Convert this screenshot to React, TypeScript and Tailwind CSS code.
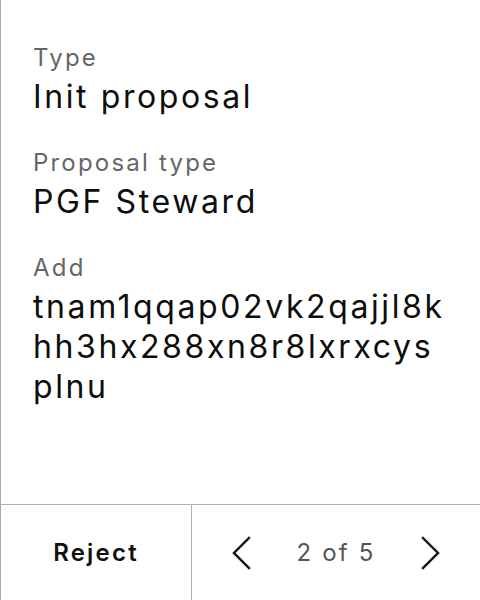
import React from "react";

function Chevron({ dir }: { dir: "left" | "right" }) {
  return (
    <svg width="20" height="34" viewBox="0 0 20 34" fill="none">
      <polyline
        points={dir === "left" ? "17,2 2,17 17,32" : "3,2 18,17 3,32"}
        stroke="#111"
        strokeWidth="2.4"
        strokeLinecap="square"
      />
    </svg>
  );
}

export default function App() {
  const font = { fontFamily: "Inter, 'Noto Sans', sans-serif" };
  return (
    <div style={font} className="w-[480px] h-[600px] bg-white flex flex-col border-l border-[#a8a8a8]">
      <div className="flex-1 flex flex-col gap-[30px] pl-8 pr-4 pt-[42px]">
        <div className="flex flex-col gap-[3px]">
          <div className="text-[24px] leading-[32px] tracking-[2.2px] text-[#666]">Type</div>
          <div className="text-[32px] leading-[40px] tracking-[2.6px] text-[#0d0d0d]">Init proposal</div>
        </div>
        <div className="flex flex-col gap-[3px]">
          <div className="text-[24px] leading-[32px] tracking-[2.2px] text-[#666]">Proposal type</div>
          <div className="text-[32px] leading-[40px] tracking-[2.6px] text-[#0d0d0d]">PGF Steward</div>
        </div>
        <div className="flex flex-col gap-[3px]">
          <div className="text-[24px] leading-[32px] tracking-[2.2px] text-[#666]">Add</div>
          <div className="text-[32px] leading-[40px] tracking-[2.6px] text-[#0d0d0d] break-all w-[418px]">
            tnam1qqap02vk2qajjl8khh3hx288xn8r8lxrxcysplnu
          </div>
        </div>
      </div>
      <div className="h-[96px] flex border-t border-[#b0b0b0]">
        <div className="w-[191px] flex items-center justify-center text-[24px] tracking-[2.2px] font-semibold text-[#111] border-r border-[#b0b0b0]">
          Reject
        </div>
        <div className="flex-1 flex items-center justify-between px-[40px]">
          <Chevron dir="left" />
          <span className="text-[24px] tracking-[2.2px] text-[#555]">2 of 5</span>
          <Chevron dir="right" />
        </div>
      </div>
    </div>
  );
}
